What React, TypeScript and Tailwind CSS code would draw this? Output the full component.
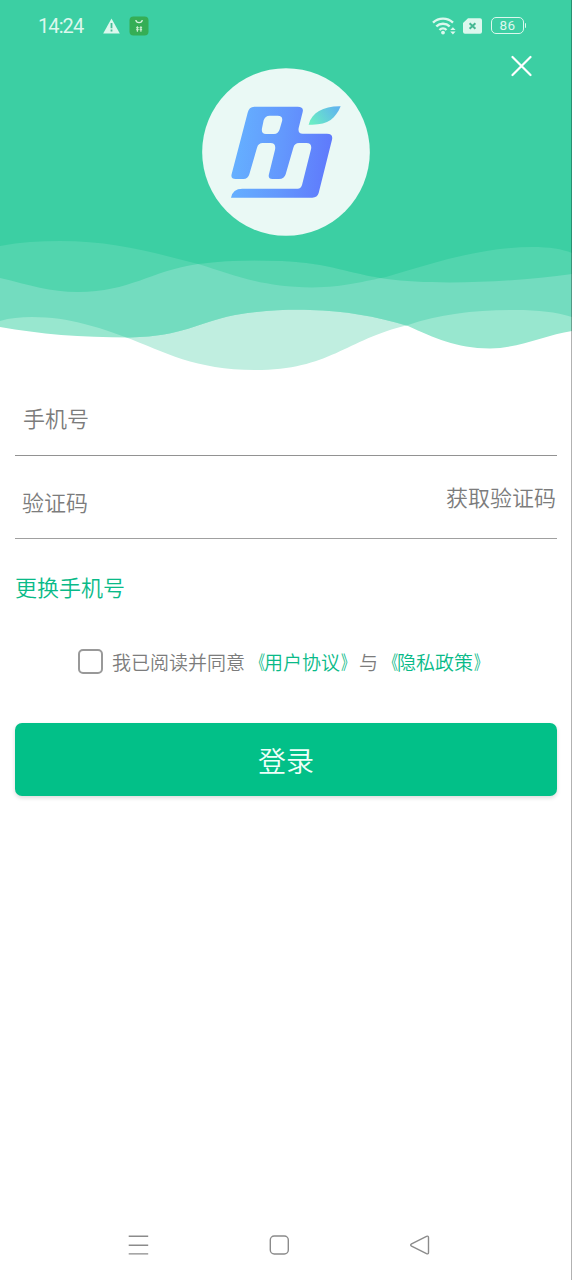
import React, { useState } from "react";

const WAVE_A =
  "M0 246C20 242 40 241 60 241C115 241 155 253 198 264C235 275 260 287 312 287.5C345 287 365 281 386 277C430 264 480 247 532 247C550 247 562 249 572 253V0H0Z";
const WAVE_B =
  "M0 278C30 285 50 292 78 292C130 292 150 271 198 264C225 260 255 260 282 261C330 263 350 274 387 279C430 285 510 283 572 274V0H0Z";
const WAVE_C =
  "M0 327C40 334 80 337.5 130 337.5C185 336 195 323 235 315C265 310 290 309.5 310 310C345 311 375 316 408 326C435 338 455 348 490 348.5C520 348 545 335 572 331V0H0Z";
const WAVE_D =
  "M0 321C10 318 20 317 32 317C70 317 100 328 125 337C165 352 195 370 255 370C330 370 345 340 408 325C440 314 475 310 515 310C540 310 555 312 572 317V0H0Z";

function Waves() {
  return (
    <svg className="absolute inset-0 h-[380px] w-[572px]" viewBox="0 0 572 380" aria-hidden="true">
      <defs>
        <clipPath id="clip-b">
          <path d={WAVE_B} />
        </clipPath>
        <clipPath id="clip-d">
          <path d={WAVE_D} />
        </clipPath>
      </defs>
      <path d={WAVE_D} fill="#c0eee0" />
      <path d={WAVE_C} fill="#98e7cf" />
      <path d={WAVE_C} fill="#73dcbf" clipPath="url(#clip-d)" />
      <path d={WAVE_A} fill="#58d6b0" />
      <path d={WAVE_B} fill="#52d5ae" />
      <path d={WAVE_A} fill="#3ccfa3" clipPath="url(#clip-b)" />
    </svg>
  );
}

function StatusBar() {
  return (
    <div className="flex h-[51px] items-center pl-[38px] pr-[46px] text-[#dcf8ee]">
      <span className="w-[65px] font-['Roboto',sans-serif] text-[20px] font-normal leading-none tracking-[-0.9px]">14:24</span>
      <svg className="h-[16px] w-[17px]" viewBox="0 0 17 16">
        <path d="M8.5 .5L16.8 15.5H.2Z" fill="currentColor" />
        <path d="M8.5 5v5.2M8.5 11.6v2" stroke="#45bd98" strokeWidth="1.8" />
      </svg>
      <svg className="ml-[9px] h-[20px] w-[20px]" viewBox="0 0 20 20">
        <rect x=".5" y=".5" width="19" height="19" rx="4" fill="#35ae55" />
        <path d="M6.8 4a3.3 3.2 0 0 0 6.5 0" fill="none" stroke="#d5f3dd" strokeWidth="1.3" />
        <path d="M7.2 11.6h2.5M10.6 11.6h2.5M8.4 10.2v5.6M11.9 10.2v5.6M7.2 13.6h2.5M10.6 13.6h2.5" stroke="#c9edcf" strokeWidth="1.2" />
      </svg>
      <div className="ml-auto flex items-center">
        <svg className="h-[20px] w-[24px]" viewBox="0 0 24 20" fill="none" stroke="currentColor" strokeWidth="2.4">
          <path d="M1 6.6a14.5 14.5 0 0 1 20 0" />
          <path d="M4.3 10.4a9.7 9.7 0 0 1 13.4 0" />
          <path d="M7.5 14a5 5 0 0 1 7 0" />
          <circle cx="11" cy="16.6" r="1.9" fill="currentColor" stroke="none" />
          <path d="M18.2 14L20.9 11.2l2.7 2.8zM18.2 15.6L20.9 18.4l2.7-2.8z" fill="currentColor" stroke="none" />
        </svg>
        <svg className="ml-[7px] h-[16px] w-[19px]" viewBox="0 0 19 16">
          <path d="M5 .3H17Q19 .3 19 2.3V13.7Q19 15.7 17 15.7H2Q0 15.7 0 13.7V5Z" fill="currentColor" />
          <path d="M6.6 5.3l5.8 5.4M12.4 5.3l-5.8 5.4" stroke="#45b893" strokeWidth="2" />
        </svg>
        <div className="ml-[9px] flex h-[17px] w-[33px] items-center justify-center rounded-[5px] border-[1.5px] border-current pl-px font-['Roboto',sans-serif] text-[13.5px] font-normal leading-none tracking-[0.4px]">
          86
        </div>
        <span className="ml-px h-[5px] w-[1.5px] rounded-r bg-current" />
      </div>
    </div>
  );
}

function Logo() {
  return (
    <svg className="h-[182px] w-[182px]" viewBox="0 0 546 546" role="img">
      <defs>
        <linearGradient id="mark" gradientUnits="userSpaceOnUse" x1="110" y1="270" x2="410" y2="300">
          <stop offset="0" stopColor="#65b1ff" />
          <stop offset=".5" stopColor="#6398fd" />
          <stop offset="1" stopColor="#5f79fc" />
        </linearGradient>
        <linearGradient id="leaf" x1="0" y1=".7" x2="1" y2=".3">
          <stop offset="0" stopColor="#6aedc4" />
          <stop offset="1" stopColor="#60b4ee" />
        </linearGradient>
      </defs>
      <circle cx="273" cy="276" r="251.5" fill="#eaf9f5" />
      <path
        fill="url(#mark)"
        fillRule="evenodd"
        d="M178 140H308Q327 140 323 156L311 204Q308 221 323 221H396Q415 221 411 239L371 399Q367 413 352 413H108Q113 386 142 386H308Q318 386 321 375L348 268Q352 249 334 249H312Q299 249 295 263L272 343Q268 357 252 357H232Q218 357 222 342L240 269Q244 249 226 249H203Q190 249 186 263L163 343Q159 357 145 357H122Q106 357 110 342L158 158Q162 140 178 140ZM224 167Q210 167 206 181L201 205Q198 222 213 222H237Q250 222 254 208L261 184Q265 167 248 167Z"
      />
      <path fill="url(#leaf)" d="M341 194C350 157 386 138 437 139C421 177 397 197 341 194Z" />
    </svg>
  );
}

function AgreementLink({ title }: { title: string }) {
  return (
    <span className="text-[#09ba88]">
      <span className="inline-block origin-right translate-x-px scale-x-[0.7] font-normal">《</span>
      {title}
      <span className="inline-block origin-left translate-x-px scale-x-[0.7] font-normal">》</span>
    </span>
  );
}

function NavBar() {
  return (
    <nav className="flex h-[70px] items-center justify-between pl-[128px] pr-[142px] text-[#8b8b8b]">
      <svg className="h-[22px] w-[21px]" viewBox="0 0 21 22" fill="none" stroke="currentColor" strokeWidth="1.4">
        <path d="M.7 2.3h19.5M.7 11.2h19.5M.7 19.9h19.5" />
      </svg>
      <svg className="h-[22px] w-[22px]" viewBox="0 0 22 22" fill="none" stroke="currentColor" strokeWidth="1.4">
        <rect x="2.3" y="2" width="18" height="18" rx="4" />
      </svg>
      <svg className="h-[22px] w-[21px]" viewBox="0 0 21 22" fill="none" stroke="currentColor" strokeWidth="1.4">
        <path d="M2.6 9.8L17.5 2.3Q19.5 1.5 19.5 3.6V18.4Q19.5 20.5 17.5 19.6L2.6 12.2Q.8 11 2.6 9.8Z" />
      </svg>
    </nav>
  );
}

export default function App() {
  const [agreed, setAgreed] = useState(false);

  return (
    <div className="relative flex h-[1280px] w-[572px] flex-col overflow-hidden bg-white font-['Noto_Sans_CJK_SC',sans-serif] font-[350]">
      <header className="relative h-[380px] shrink-0">
        <Waves />
        <div className="relative">
          <StatusBar />
          <div className="flex h-[9px] justify-end pr-[40px]">
            <button type="button" className="h-[30px] w-[21px]">
              <svg className="h-[30px] w-[21px]" viewBox="0 0 21 30" stroke="#fff" strokeWidth="2.2" strokeLinecap="round">
                <path d="M1.5 6l18 18M19.5 6l-18 18" />
              </svg>
            </button>
          </div>
          <div className="flex justify-center">
            <Logo />
          </div>
        </div>
      </header>

      <main className="flex flex-1 flex-col px-[15px] text-[22px] text-[#7c7c7c]">
        <div className="flex h-[76px] items-center border-b border-[#929292] pl-[8px]">
          <span>手机号</span>
        </div>
        <div className="flex h-[83px] items-center justify-between border-b border-[#a0a0a0]">
          <span className="pl-[7px] pt-[9px]">验证码</span>
          <button type="button" className="pb-[1px] pr-[1px]">获取验证码</button>
        </div>
        <button type="button" className="mt-[31px] h-[32px] self-start text-[22px] leading-[32px] text-[#09ba88]">
          更换手机号
        </button>
        <div className="mt-[43px] flex h-[32px] items-center pl-[63px] text-[19px]">
          <button
            type="button"
            onClick={() => setAgreed(!agreed)}
            className="mr-[9px] flex h-[25px] w-[25px] items-center justify-center rounded-[5px] border-[2.5px] border-[#999]"
          >
            {agreed && <span className="h-3 w-3 rounded-sm bg-[#02c088]" />}
          </button>
          <span className="whitespace-nowrap pt-[2px]">
            我已阅读并同意
            <AgreementLink title="用户协议" />与<AgreementLink title="隐私政策" />
          </span>
        </div>
        <button
          type="button"
          className="mt-[46px] flex h-[73px] items-center justify-center rounded-[7px] bg-[#02c088] text-[28px] text-[#effff9] shadow-[0_2px_4px_rgba(0,0,0,0.14)]"
        >
          登录
        </button>
      </main>

      <NavBar />
      <div className="pointer-events-none absolute inset-y-0 right-0 w-px bg-black/30" />
    </div>
  );
}
